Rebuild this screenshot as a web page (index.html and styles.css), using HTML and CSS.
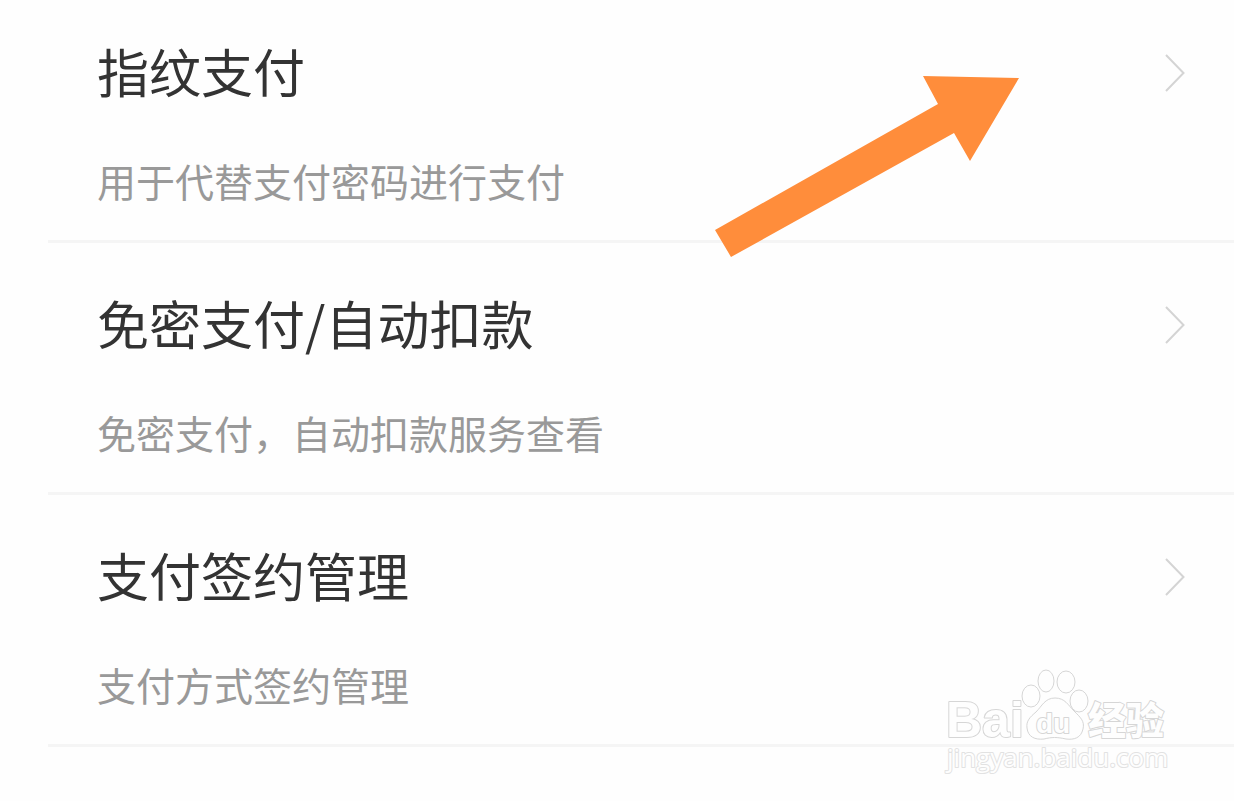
FILE: index.html
```html
<!DOCTYPE html>
<html lang="zh-CN">
<head>
<meta charset="utf-8">
<meta name="viewport" content="width=device-width, initial-scale=1">
<title>支付设置</title>
<link rel="stylesheet" href="styles.css">
</head>
<body>
<main class="page">
  <nav class="settings">
    <a class="row" href="#fingerprint">
      <span class="row-title">指纹支付</span>
      <svg class="chevron" viewBox="0 0 20 40" aria-hidden="true"><path d="M1 2 18.500 20 1 38"/></svg>
      <span class="row-note">用于代替支付密码进行支付</span>
    </a>
    <a class="row" href="#auto-debit">
      <span class="row-title">免密支付/自动扣款</span>
      <svg class="chevron" viewBox="0 0 20 40" aria-hidden="true"><path d="M1 2 18.500 20 1 38"/></svg>
      <span class="row-note">免密支付，自动扣款服务查看</span>
    </a>
    <a class="row" href="#contracts">
      <span class="row-title">支付签约管理</span>
      <svg class="chevron" viewBox="0 0 20 40" aria-hidden="true"><path d="M1 2 18.500 20 1 38"/></svg>
      <span class="row-note">支付方式签约管理</span>
    </a>
  </nav>
  <svg class="pointer" viewBox="0 0 306 184" aria-hidden="true">
    <path d="M1 155 224 29 209 1 305 3 256 86 240 58 17 182Z"/>
  </svg>
  <svg class="watermark" viewBox="0 0 228 114" role="img" aria-label="Baidu 经验 jingyan.baidu.com">
    <text class="mark-latin" x="2" y="73">Bai</text>
    <ellipse cx="87" cy="32" rx="9" ry="11"/>
    <ellipse cx="102" cy="17" rx="8" ry="11"/>
    <ellipse cx="122" cy="18" rx="9" ry="11"/>
    <ellipse cx="135" cy="37" rx="9" ry="11"/>
    <path d="M111 34C121 34 124 41 130 47C136 53 141 57 139 65C137 74 130 76 122 75C113 73 108 73 100 75C91 76 84 73 83 64C82 57 86 53 92 48C98 42 101 34 111 34Z"/>
    <text class="mark-du" x="92" y="69">du</text>
    <text class="mark-cjk" x="144" y="70">经验</text>
    <text class="mark-url" x="3" y="103">jingyan.baidu.com</text>
  </svg>
</main>
</body>
</html>
```
FILE: styles.css
```css
body {
  margin: 0;
  background: #fefefe;
  font-family: "Noto Sans CJK SC", sans-serif;
}

.page {
  position: relative;
  min-height: 100vh;
  overflow: hidden;
}

.settings {
  padding-left: 48px;
}

.row {
  display: grid;
  grid-template-columns: 1fr 20px;
  row-gap: 55px;
  align-items: center;
  padding: 50px 49px 36px;
  border-bottom: 3px solid #f5f5f5;
  color: #333;
  text-decoration: none;
}

.row:first-child {
  padding-top: 41px;
}

.row-title {
  font-size: 52px;
  line-height: 60px;
}

.row-note {
  grid-column: 1 / -1;
  color: #999;
  font-size: 39px;
  line-height: 48px;
}

.chevron {
  width: 20px;
  height: 40px;
  margin-top: 4px;
  fill: none;
  stroke: #d4d4d4;
  stroke-width: 2;
}

.pointer {
  position: absolute;
  top: 75px;
  left: 714px;
  width: 306px;
  height: 184px;
  fill: #ff8d3b;
}

.watermark {
  position: absolute;
  top: 664px;
  right: 62px;
  width: 228px;
  height: 114px;
  fill: #fefefe;
  stroke: #d6d6d6;
  stroke-width: 1;
  stroke-linejoin: round;
}

.watermark text {
  paint-order: stroke;
  stroke-width: 2;
}

.mark-latin,
.mark-du {
  font-family: "Liberation Sans", sans-serif;
  font-weight: 700;
}

.mark-latin {
  font-size: 50px;
}

.mark-du {
  font-size: 28px;
}

.mark-cjk {
  font-size: 38px;
  font-weight: 900;
}

.mark-url {
  font-family: "Open Sans", sans-serif;
  font-size: 26px;
  stroke: #e2e2e2;
}
```
